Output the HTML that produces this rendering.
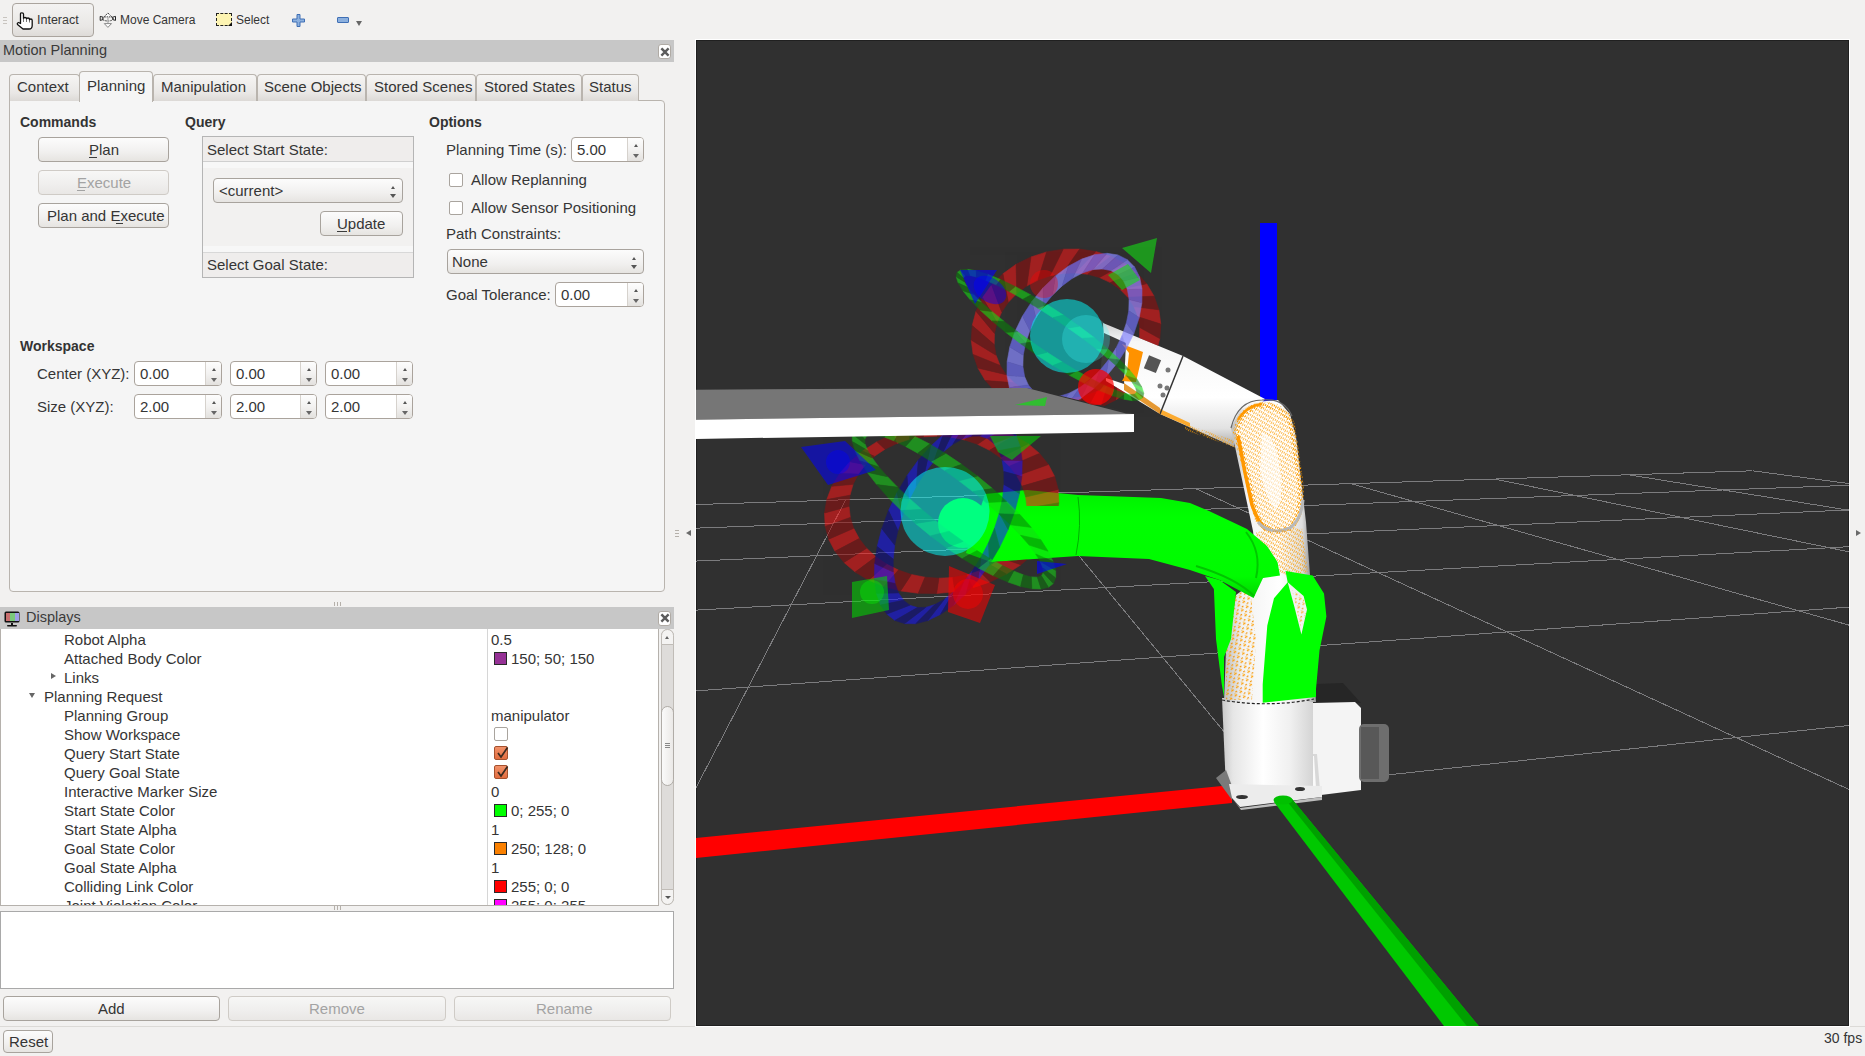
<!DOCTYPE html>
<html><head><meta charset="utf-8">
<style>
*{box-sizing:border-box}
html,body{margin:0;padding:0}
body{width:1865px;height:1056px;overflow:hidden;position:relative;background:#f2f1f0;font-family:"Liberation Sans",sans-serif;color:#353535;font-size:15px}
.a{position:absolute}
.t{position:absolute;white-space:pre;line-height:1;margin-top:-1px}
.btn{position:absolute;border:1px solid #a8a39d;border-radius:4px;background:linear-gradient(#fcfcfc,#f1f0ef 60%,#e6e4e1);}
.btnd{position:absolute;border:1px solid #cfcbc6;border-radius:4px;background:linear-gradient(#f7f7f6,#efeeed 60%,#e9e7e5);}
.tab{position:absolute;top:74px;height:27px;border:1px solid #b9b4ae;border-bottom:none;border-radius:4px 4px 0 0;background:linear-gradient(#f6f5f4,#e9e7e5 70%,#dcd9d6)}
.spin{position:absolute;height:25px;border:1px solid #aaa39c;border-radius:4px;background:#fff}
.spin .ar{position:absolute;right:0;top:0;bottom:0;width:16px;border-left:1px solid #d6d2cd;border-radius:0 3px 3px 0;background:linear-gradient(#fdfdfd,#f3f2f1 50%,#e3e1de)}
.spin .ar:before{content:"";position:absolute;left:6px;top:6px;border-left:2.5px solid transparent;border-right:2.5px solid transparent;border-bottom:3px solid #555}
.spin .ar:after{content:"";position:absolute;left:5px;top:16px;border-left:3.5px solid transparent;border-right:3.5px solid transparent;border-top:4px solid #666}
.combo:after{content:"";position:absolute;right:6px;top:15px;border-left:3.5px solid transparent;border-right:3.5px solid transparent;border-top:4px solid #555}
.combo:before{content:"";position:absolute;right:7px;top:7px;border-left:2.5px solid transparent;border-right:2.5px solid transparent;border-bottom:3px solid #555}
.ul{position:absolute;height:1px;background:#3c3c3c}
.combo{position:absolute;height:25px;border:1px solid #a8a39d;border-radius:4px;background:linear-gradient(#fcfcfc,#f1f0ef 60%,#e6e4e1)}
.cb{position:absolute;width:14px;height:14px;border:1px solid #a9a49e;border-radius:2px;background:#fff}
.row{position:absolute;left:64px;white-space:pre;line-height:1}
.val{position:absolute;left:491px;white-space:pre;line-height:1}
.sw{position:absolute;left:494px;width:13px;height:13px;border:1px solid #2a2a2a}
</style></head><body>

<!-- toolbar -->
<div class="a" style="left:3px;top:17px;width:4px;height:1px;background:#c8c4bf"></div>
<div class="a" style="left:3px;top:20px;width:4px;height:1px;background:#c8c4bf"></div>
<div class="a" style="left:3px;top:23px;width:4px;height:1px;background:#c8c4bf"></div>
<div class="btn" style="left:12px;top:3px;width:82px;height:34px;border-color:#aaa49e;background:linear-gradient(#f4f3f2,#e9e7e5 70%,#dedbd8)"></div>
<svg class="a" style="left:16px;top:12px" width="18" height="18" viewBox="0 0 18 18"><path d="M4.5,2 Q4.5,0.8 6,0.8 Q7.5,0.8 7.5,2 V6.5 Q7.5,5.5 9,5.5 Q10.5,5.5 10.5,6.6 V7 Q10.5,6 12,6 Q13.5,6 13.5,7.2 V8 Q13.5,7 14.8,7 Q16.2,7 16.2,8.5 V13.5 Q16.2,17 13,17 H7 L1.5,12.5 Q0.8,11 2.5,10.5 L4.5,11.5 Z" fill="#fff" stroke="#111" stroke-width="1.3" stroke-linejoin="round"/><path d="M7.5,6.5 V10 M10.5,7 V10 M13.5,8 V10.5" stroke="#555" stroke-width="0.8"/></svg>
<div class="t" style="left:37px;top:15px;font-size:12.5px">Interact</div>
<svg class="a" style="left:99px;top:11px" width="18" height="18" viewBox="0 0 18 18"><path d="M1.2,5.4 L4,6.2 L4,8.6 L1.2,9.4Z M16.5,5.4 L13.7,6.2 L13.7,8.6 L16.5,9.4Z" fill="#fff" stroke="#222" stroke-width="1"/><ellipse cx="8.9" cy="7.6" rx="5.6" ry="2.4" fill="none" stroke="#333" stroke-width="1" stroke-dasharray="1.5,1"/><path d="M8.9,2 L12.8,5.9 L5,5.9Z" fill="#fff" stroke="#333" stroke-width="1" stroke-dasharray="1.5,0.8"/><rect x="8.3" y="6" width="1.3" height="7" fill="#b0b0b0"/><path d="M5.3,12.6 L12.5,12.6 L8.9,16.4Z" fill="#fff" stroke="#888" stroke-width="1"/></svg>
<div class="t" style="left:120px;top:15px;font-size:12px">Move Camera</div>
<div class="a" style="left:216px;top:13px;width:16px;height:13px;border:1px dashed #222;background:#fdf4b2"></div>
<div class="a" style="left:228px;top:22px;width:0;height:0;border-left:4px solid transparent;border-bottom:4px solid #111"></div>
<div class="t" style="left:236px;top:15px;font-size:12px">Select</div>
<svg class="a" style="left:292px;top:14px" width="14" height="13" viewBox="0 0 14 13"><path d="M5 0.5h3v4.5h4.5v3h-4.5v4.5h-3v-4.5h-4.5v-3h4.5z" fill="#8cb0de" stroke="#3f6fb5" stroke-width="1"/></svg>
<div class="a" style="left:337px;top:17px;width:12px;height:6px;border:1px solid #3f6fb5;background:#8cb0de;border-radius:1px"></div>
<div class="a" style="left:356px;top:21px;width:0;height:0;border-left:3.5px solid transparent;border-right:3.5px solid transparent;border-top:5px solid #666"></div>

<!-- Motion Planning dock -->
<div class="a" style="left:0;top:40px;width:674px;height:22px;background:#c7c7c7"></div>
<div class="t" style="left:3px;top:44px;font-size:14.5px;color:#3a3a3a">Motion Planning</div>
<div class="a" style="left:658px;top:44px;width:13px;height:15px;background:#fff;border:1px solid #b0aba5;border-radius:3px"></div>
<svg class="a" style="left:659px;top:46px" width="12" height="12" viewBox="0 0 12 12"><path d="M3.2 3.2 L8.8 8.8 M8.8 3.2 L3.2 8.8" stroke="#5c5c5c" stroke-width="2.4" stroke-linecap="square"/></svg>

<!-- tab pane -->
<div class="a" style="left:9px;top:100px;width:656px;height:492px;border:1px solid #b9b4ae;border-radius:0 4px 4px 4px;background:#f5f5f5"></div>
<div class="tab" style="left:9px;width:71px"></div>
<div class="a" style="left:79px;top:71px;width:74px;height:31px;border:1px solid #b9b4ae;border-bottom:none;border-radius:4px 4px 0 0;background:#f5f5f5"></div>
<div class="tab" style="left:153px;width:104px"></div>
<div class="tab" style="left:257px;width:109px"></div>
<div class="tab" style="left:366px;width:110px"></div>
<div class="tab" style="left:476px;width:106px"></div>
<div class="tab" style="left:582px;width:57px"></div>
<div class="t" style="left:17px;top:80px">Context</div>
<div class="t" style="left:87px;top:79px">Planning</div>
<div class="t" style="left:161px;top:80px">Manipulation</div>
<div class="t" style="left:264px;top:80px">Scene Objects</div>
<div class="t" style="left:374px;top:80px">Stored Scenes</div>
<div class="t" style="left:484px;top:80px">Stored States</div>
<div class="t" style="left:589px;top:80px">Status</div>

<!-- Commands -->
<div class="t" style="left:20px;top:116px;font-size:14px;font-weight:bold;color:#333">Commands</div>
<div class="btn" style="left:38px;top:137px;width:131px;height:25px"></div>
<div class="t" style="left:89px;top:143px">Plan</div><div class="ul" style="left:89px;top:157px;width:8px"></div>
<div class="btnd" style="left:38px;top:170px;width:131px;height:25px"></div>
<div class="t" style="left:77px;top:176px;color:#a3a3a3">Execute</div><div class="ul" style="left:77px;top:190px;width:8px;background:#a3a3a3"></div>
<div class="btn" style="left:38px;top:203px;width:131px;height:25px"></div>
<div class="t" style="left:47px;top:209px">Plan and Execute</div><div class="ul" style="left:116px;top:223px;width:7px"></div>

<!-- Query -->
<div class="t" style="left:185px;top:116px;font-size:14px;font-weight:bold;color:#333">Query</div>
<div class="a" style="left:202px;top:136px;width:212px;height:142px;border:1px solid #b5b5b5;background:#f2f1f0"></div>
<div class="a" style="left:203px;top:137px;width:210px;height:25px;background:#efedec;border-bottom:1px solid #cfcfcf"></div>
<div class="a" style="left:203px;top:162px;width:210px;height:6px;background:#f7f7f7"></div>
<div class="a" style="left:203px;top:246px;width:210px;height:6px;background:#f7f7f7"></div>
<div class="a" style="left:203px;top:252px;width:210px;height:25px;background:#efedec;border-top:1px solid #d8d8d8"></div>
<div class="t" style="left:207px;top:143px">Select Start State:</div>
<div class="t" style="left:207px;top:258px">Select Goal State:</div>
<div class="combo" style="left:213px;top:178px;width:190px;height:25px"></div>
<div class="t" style="left:219px;top:184px">&lt;current&gt;</div>
<div class="btn" style="left:320px;top:211px;width:83px;height:25px"></div>
<div class="t" style="left:337px;top:217px">Update</div><div class="ul" style="left:337px;top:231px;width:10px"></div>

<!-- Options -->
<div class="t" style="left:429px;top:116px;font-size:14px;font-weight:bold;color:#333">Options</div>
<div class="t" style="left:446px;top:143px">Planning Time (s):</div>
<div class="spin" style="left:571px;top:137px;width:73px"><div class="ar"></div></div>
<div class="t" style="left:577px;top:143px">5.00</div>
<div class="cb" style="left:449px;top:173px"></div>
<div class="t" style="left:471px;top:173px">Allow Replanning</div>
<div class="cb" style="left:449px;top:201px"></div>
<div class="t" style="left:471px;top:201px">Allow Sensor Positioning</div>
<div class="t" style="left:446px;top:227px">Path Constraints:</div>
<div class="combo" style="left:447px;top:249px;width:197px;height:25px"></div>
<div class="t" style="left:452px;top:255px">None</div>
<div class="t" style="left:446px;top:288px">Goal Tolerance:</div>
<div class="spin" style="left:555px;top:282px;width:89px"><div class="ar"></div></div>
<div class="t" style="left:561px;top:288px">0.00</div>

<!-- Workspace -->
<div class="t" style="left:20px;top:340px;font-size:14px;font-weight:bold;color:#333">Workspace</div>
<div class="t" style="left:37px;top:367px">Center (XYZ):</div>
<div class="t" style="left:37px;top:400px">Size (XYZ):</div>
<div class="spin" style="left:134px;top:361px;width:88px"><div class="ar"></div></div>
<div class="spin" style="left:230px;top:361px;width:87px"><div class="ar"></div></div>
<div class="spin" style="left:325px;top:361px;width:88px"><div class="ar"></div></div>
<div class="spin" style="left:134px;top:394px;width:88px"><div class="ar"></div></div>
<div class="spin" style="left:230px;top:394px;width:87px"><div class="ar"></div></div>
<div class="spin" style="left:325px;top:394px;width:88px"><div class="ar"></div></div>
<div class="t" style="left:140px;top:367px">0.00</div>
<div class="t" style="left:236px;top:367px">0.00</div>
<div class="t" style="left:331px;top:367px">0.00</div>
<div class="t" style="left:140px;top:400px">2.00</div>
<div class="t" style="left:236px;top:400px">2.00</div>
<div class="t" style="left:331px;top:400px">2.00</div>

<!-- Displays dock -->
<div class="a" style="left:0;top:607px;width:674px;height:22px;background:#c7c7c7"></div>
<div class="t" style="left:26px;top:611px;font-size:14.5px;color:#3a3a3a">Displays</div>
<div class="a" style="left:658px;top:611px;width:13px;height:15px;background:#fff;border:1px solid #b0aba5;border-radius:3px"></div><svg class="a" style="left:659px;top:612px" width="12" height="12" viewBox="0 0 12 12"><path d="M3.2 3.2 L8.8 8.8 M8.8 3.2 L3.2 8.8" stroke="#5c5c5c" stroke-width="2.4" stroke-linecap="square"/></svg>
<svg class="a" style="left:4px;top:611px" width="17" height="16" viewBox="0 0 17 16"><rect x="0.5" y="0.5" width="15" height="11" rx="1.5" fill="#111"/><rect x="2" y="2" width="4" height="8" fill="#c86e6e"/><rect x="6" y="2" width="5" height="8" fill="#7ac87a"/><rect x="11" y="2" width="4" height="8" fill="#9e9ee6"/><rect x="7" y="12" width="2" height="2" fill="#111"/><rect x="3" y="14" width="10" height="1.6" rx="0.8" fill="#111"/></svg>
<!-- splitter grips -->
<div class="a" style="left:334px;top:602px;width:1px;height:4px;background:#b5b0aa"></div>
<div class="a" style="left:337px;top:602px;width:1px;height:4px;background:#b5b0aa"></div>
<div class="a" style="left:340px;top:602px;width:1px;height:4px;background:#b5b0aa"></div>
<div class="a" style="left:334px;top:906px;width:1px;height:4px;background:#b5b0aa"></div>
<div class="a" style="left:337px;top:906px;width:1px;height:4px;background:#b5b0aa"></div>
<div class="a" style="left:340px;top:906px;width:1px;height:4px;background:#b5b0aa"></div>
<div class="a" style="left:675px;top:530px;width:4px;height:1px;background:#b5b0aa"></div>
<div class="a" style="left:675px;top:533px;width:4px;height:1px;background:#b5b0aa"></div>
<div class="a" style="left:675px;top:536px;width:4px;height:1px;background:#b5b0aa"></div>
<div class="a" style="left:686px;top:530px;width:0;height:0;border-top:3.5px solid transparent;border-bottom:3.5px solid transparent;border-right:5px solid #6a6a6a"></div>
<div class="a" style="left:1856px;top:530px;width:0;height:0;border-top:3.5px solid transparent;border-bottom:3.5px solid transparent;border-left:5px solid #6a6a6a"></div>

<div class="a" style="left:0;top:629px;width:659px;height:277px;background:#fff;overflow:hidden">
<div class="row" style="left:64px;top:3px">Robot Alpha</div>
<div class="val" style="top:3px">0.5</div>
<div class="row" style="left:64px;top:22px">Attached Body Color</div>
<div class="sw" style="top:23px;background:#963296"></div>
<div class="val" style="left:511px;top:22px">150; 50; 150</div>
<div class="row" style="left:64px;top:41px">Links</div>
<div class="row" style="left:44px;top:60px">Planning Request</div>
<div class="row" style="left:64px;top:79px">Planning Group</div>
<div class="val" style="top:79px">manipulator</div>
<div class="row" style="left:64px;top:98px">Show Workspace</div>
<div class="cb" style="left:494px;top:98px"></div>
<div class="row" style="left:64px;top:117px">Query Start State</div>
<div class="cb" style="left:494px;top:117px;background:linear-gradient(#f2926a,#e26c3e);border-color:#a5512e"></div><svg class="a" style="left:495px;top:116px" width="15" height="15" viewBox="0 0 15 15"><path d="M3 8 L6 12 L12.5 2.5" fill="none" stroke="#3a2a20" stroke-width="1.7"/></svg>
<div class="row" style="left:64px;top:136px">Query Goal State</div>
<div class="cb" style="left:494px;top:136px;background:linear-gradient(#f2926a,#e26c3e);border-color:#a5512e"></div><svg class="a" style="left:495px;top:135px" width="15" height="15" viewBox="0 0 15 15"><path d="M3 8 L6 12 L12.5 2.5" fill="none" stroke="#3a2a20" stroke-width="1.7"/></svg>
<div class="row" style="left:64px;top:155px">Interactive Marker Size</div>
<div class="val" style="top:155px">0</div>
<div class="row" style="left:64px;top:174px">Start State Color</div>
<div class="sw" style="top:175px;background:#00ff00"></div>
<div class="val" style="left:511px;top:174px">0; 255; 0</div>
<div class="row" style="left:64px;top:193px">Start State Alpha</div>
<div class="val" style="top:193px">1</div>
<div class="row" style="left:64px;top:212px">Goal State Color</div>
<div class="sw" style="top:213px;background:#fa8000"></div>
<div class="val" style="left:511px;top:212px">250; 128; 0</div>
<div class="row" style="left:64px;top:231px">Goal State Alpha</div>
<div class="val" style="top:231px">1</div>
<div class="row" style="left:64px;top:250px">Colliding Link Color</div>
<div class="sw" style="top:251px;background:#ff0000"></div>
<div class="val" style="left:511px;top:250px">255; 0; 0</div>
<div class="row" style="left:64px;top:269px">Joint Violation Color</div>
<div class="sw" style="top:270px;background:#ff00ff"></div>
<div class="val" style="left:511px;top:269px">255; 0; 255</div>
<div class="a" style="left:487px;top:0;width:1px;height:277px;background:#d6d6d6"></div>
<div class="a" style="left:51px;top:44px;width:0;height:0;border-top:3.5px solid transparent;border-bottom:3.5px solid transparent;border-left:5px solid #666"></div>
<div class="a" style="left:29px;top:64px;width:0;height:0;border-left:3.5px solid transparent;border-right:3.5px solid transparent;border-top:5px solid #666"></div>
</div>
<div class="a" style="left:0;top:629px;width:659px;height:277px;border:1px solid #b5b1ac;border-top:none"></div>
<!-- scrollbar -->
<div class="a" style="left:661px;top:629px;width:13px;height:276px;border:1px solid #c0bcb7;border-radius:7px;background:#dedcda"></div>
<div class="a" style="left:661px;top:629px;width:13px;height:16px;border:1px solid #c0bcb7;border-radius:7px 7px 0 0;background:#f4f3f2"></div>
<div class="a" style="left:665px;top:636px;width:0;height:0;border-left:2.5px solid transparent;border-right:2.5px solid transparent;border-bottom:3px solid #666"></div>
<div class="a" style="left:661px;top:706px;width:13px;height:80px;border:1px solid #b0aca7;border-radius:7px;background:linear-gradient(90deg,#fafafa,#ebe9e7)"></div>
<div class="a" style="left:665px;top:743px;width:5px;height:1px;background:#888"></div>
<div class="a" style="left:665px;top:745px;width:5px;height:1px;background:#888"></div>
<div class="a" style="left:665px;top:747px;width:5px;height:1px;background:#888"></div>
<div class="a" style="left:661px;top:889px;width:13px;height:16px;border:1px solid #c0bcb7;border-radius:0 0 7px 7px;background:#f4f3f2"></div>
<div class="a" style="left:665px;top:896px;width:0;height:0;border-left:3px solid transparent;border-right:3px solid transparent;border-top:3px solid #555"></div>

<!-- description -->
<div class="a" style="left:0;top:911px;width:674px;height:78px;background:#fff;border:1px solid #a9a9a9"></div>
<div class="btn" style="left:3px;top:996px;width:217px;height:25px"></div>
<div class="t" style="left:98px;top:1002px">Add</div>
<div class="btnd" style="left:228px;top:996px;width:218px;height:25px"></div>
<div class="t" style="left:309px;top:1002px;color:#a3a3a3">Remove</div>
<div class="btnd" style="left:454px;top:996px;width:217px;height:25px"></div>
<div class="t" style="left:536px;top:1002px;color:#a3a3a3">Rename</div>

<!-- status bar -->
<div class="a" style="left:0;top:1026px;width:1865px;height:1px;background:#dcdad7"></div>
<div class="btn" style="left:3px;top:1030px;width:50px;height:23px"></div>
<div class="t" style="left:9px;top:1035px">Reset</div>
<div class="t" style="left:1824px;top:1032px;font-size:14px">30 fps</div>

<!-- 3D view -->
<div class="a" style="left:695px;top:39px;width:1155px;height:988px;background:#fff"></div>
<div class="a" style="left:696px;top:40px;width:1153px;height:986px;background:#303030"></div>
<div class="a" style="left:696px;top:40px;width:1153px;height:986px;border:1px solid #202020"></div>
<!--SCENE--><svg class="a" style="left:696px;top:40px" width="1153" height="986" viewBox="696 40 1153 986"><g stroke="#7c7c7e" stroke-width="1" fill="none" shape-rendering="crispEdges" transform="translate(0,0.6)"><line x1="2860.3" y1="616.4" x2="-6472.5" y2="1617.4"/><line x1="2452.8" y1="562.6" x2="-2305.5" y2="908.5"/><line x1="2186.6" y1="527.5" x2="-1143.3" y2="710.7"/><line x1="1999.1" y1="502.7" x2="-597" y2="617.8"/><line x1="1859.9" y1="484.3" x2="-279.7" y2="563.8"/><line x1="1752.5" y1="470.2" x2="-72.2" y2="528.5"/><line x1="1752.5" y1="470.2" x2="7291.7" y2="1201.1"/><line x1="1628" y1="474.1" x2="6748.2" y2="1296.9"/><line x1="1494.5" y1="478.4" x2="6044.4" y2="1412.6"/><line x1="1350.8" y1="483" x2="5123" y2="1554.7"/><line x1="1195.7" y1="488" x2="3898.4" y2="1732.7"/><line x1="1027.9" y1="493.3" x2="2238.5" y2="1961.3"/><line x1="845.7" y1="499.2" x2="-71.8" y2="2264"/><line x1="647.1" y1="505.5" x2="-3405.2" y2="2681.3"/><line x1="429.8" y1="512.5" x2="-8464.5" y2="3289.4"/><line x1="191.2" y1="520.1" x2="-16745.6" y2="4249.5"/><line x1="-72.2" y1="528.5" x2="-32073.6" y2="5972.9"/></g>
<polygon points="690,838.6 1232,785 1232,803 690,858.5" fill="#ff0000" />
<rect x="1260" y="223" width="17" height="183" fill="#0000ff"/>
<polygon points="1316,684 1343,683 1361,703 1313,704" fill="#262626" />
<polygon points="1313,703 1355,702 1361,708 1361,790 1313,796" fill="#f4f4f4" />
<rect x="1359" y="724" width="30" height="58" rx="5" fill="#6e6e6e"/>
<rect x="1361" y="727" width="18" height="52" fill="#585858"/>
<polygon points="1298,754 1317,754 1320,790 1296,792" fill="#d8d8d8" />
<polygon points="1304,756 1314,756 1316,788 1303,789" fill="#fafafa" />
<defs><linearGradient id="cyl" x1="0" x2="1" y1="0" y2="0"><stop offset="0" stop-color="#c8c8c8"/><stop offset="0.12" stop-color="#e6e6e6"/><stop offset="0.45" stop-color="#ffffff"/><stop offset="0.75" stop-color="#f0f0f0"/><stop offset="1" stop-color="#d4d4d4"/></linearGradient><linearGradient id="lnk" x1="0" x2="1" y1="0" y2="0"><stop offset="0" stop-color="#bdbdbd"/><stop offset="0.2" stop-color="#f2f2f2"/><stop offset="0.6" stop-color="#ffffff"/><stop offset="0.9" stop-color="#dedede"/><stop offset="1" stop-color="#9a9a9a"/></linearGradient><linearGradient id="arm" x1="0" x2="0" y1="0" y2="1"><stop offset="0" stop-color="#cfcfcf"/><stop offset="0.15" stop-color="#f6f6f6"/><stop offset="0.6" stop-color="#ffffff"/><stop offset="0.85" stop-color="#e2e2e2"/><stop offset="1" stop-color="#a8a8a8"/></linearGradient><pattern id="spk" width="5" height="5" patternUnits="userSpaceOnUse" patternTransform="rotate(30)"><rect width="5" height="5" fill="none"/><rect x="0" y="0" width="2" height="1" fill="#ff9e00"/><rect x="3" y="2" width="1" height="2" fill="#f59000"/></pattern></defs>
<polygon points="1222,698 1313,698 1313,789 1226,789" fill="url(#cyl)" />
<polygon points="1216,778 1226,770 1232,786 1232,800" fill="#7a7a7a" />
<polygon points="1229,784 1322,786 1322,797 1240,807 1232,798" fill="#ececec" />
<polygon points="1232,798 1240,808 1322,797 1322,800 1241,810" fill="#bdbdbd" />
<ellipse cx="1242" cy="797" rx="6" ry="2" fill="#333"/><ellipse cx="1300" cy="789" rx="5" ry="2" fill="#333"/>
<polygon points="1274,802 1292,799 1482,1030 1447,1030" fill="#00c800"/>
<polygon points="1286,800 1292,799 1482,1030 1470,1030" fill="#00a000"/>
<ellipse cx="1283" cy="800" rx="9.5" ry="4.5" fill="#00c000"/>
<polygon points="1103,323 1183,356 1265,399 1248,418 1236,436 1234,447 1160,414 1106,381" fill="url(#arm)" />
<polygon points="1160,409 1190,423 1190,427 1160,414" fill="#ff9a00" opacity="0.8"/>
<polygon points="1185,424 1236,441 1236,448 1185,430" fill="url(#spk3)" opacity="0.7"/>
<line x1="1183" y1="356" x2="1160" y2="414" stroke="#333" stroke-width="1.5"/>
<polygon points="1104,333 1126,343 1124,384 1100,376" fill="#3c3c3c" />
<polygon points="1122,344 1143,352 1136,382 1122,381 1127,372 1129,353" fill="#ff9200" />
<polygon points="1124,383 1160,408 1160,414 1124,390" fill="#e08000" opacity="0.8"/>
<rect x="1146" y="357" width="13" height="14" fill="#555" transform="rotate(22 1152 364)"/>
<circle cx="1168" cy="370" r="2.5" fill="#777"/><circle cx="1160" cy="386" r="2.5" fill="#777"/><circle cx="1167" cy="388" r="2.5" fill="#777"/><circle cx="1163" cy="395" r="2.5" fill="#777"/>
<defs><pattern id="spk2" width="6" height="6" patternUnits="userSpaceOnUse" patternTransform="rotate(-35)"><rect x="0" y="0" width="3" height="1.2" fill="#ff9c00"/><rect x="3" y="3" width="2" height="1.2" fill="#f29000"/><rect x="1" y="4.5" width="1.5" height="1" fill="#ffa800"/></pattern></defs>
<polygon points="1224,702 1226,650 1236,595 1258,579 1276,572 1290,576 1306,590 1312,640 1316,702" fill="url(#lnk)" />
<polygon points="1226,600 1250,586 1256,640 1252,700 1226,700" fill="url(#spk2)" opacity="0.9"/>
<path d="M1258,580 Q1276,566 1290,576" fill="none" stroke="#555" stroke-width="2"/>
<defs><pattern id="spk3" width="4" height="4" patternUnits="userSpaceOnUse" patternTransform="rotate(-60)"><rect x="0" y="0" width="3" height="1" fill="#ffa000"/><rect x="1" y="2" width="2" height="1" fill="#f39200"/></pattern></defs>
<polygon points="1231,428 1240,410 1256,402 1278,400 1290,414 1296,437 1306,522 1310,575 1290,578 1276,572 1258,575 1253,531 1240,470" fill="url(#lnk)" />
<path d="M1231,428 Q1238,400 1262,400 Q1284,398 1292,416" fill="none" stroke="#666" stroke-width="1.2"/>
<path d="M1236,432 Q1240,408 1262,405 Q1284,404 1292,425 L1300,480 Q1304,515 1290,528 Q1270,536 1258,520 Q1252,500 1246,470 Z" fill="#ffffff"/>
<path d="M1236,432 Q1240,408 1262,405 Q1284,404 1292,425 L1300,480 Q1304,515 1290,528 Q1270,536 1258,520 Q1252,500 1246,470 Z" fill="url(#spk3)" opacity="0.7"/>
<path d="M1262,432 Q1276,436 1280,470 Q1284,500 1276,510 Q1266,500 1260,470Z" fill="#ffffff" opacity="0.6"/>
<path d="M1236,432 Q1240,408 1262,405 Q1284,404 1292,425 L1300,480 Q1304,515 1290,528 Q1270,536 1258,520 Q1252,500 1246,470 Z" fill="none" stroke="url(#spk3)" stroke-width="6"/>
<path d="M1238,436 Q1244,470 1252,505 Q1258,522 1266,530" fill="none" stroke="#ff9800" stroke-width="3.5"/>
<path d="M1238,420 Q1246,406 1262,404" fill="none" stroke="#ff9800" stroke-width="2.5"/>
<path d="M1258,522 Q1270,536 1290,528 Q1302,518 1303,500" fill="none" stroke="#b8b8b8" stroke-width="3"/>
<polygon points="1256,532 1302,528 1308,572 1290,576 1276,571 1259,574" fill="url(#spk3)" opacity="0.75"/>
<defs><linearGradient id="grn" x1="0" x2="0" y1="0" y2="1"><stop offset="0" stop-color="#00f000"/><stop offset="0.25" stop-color="#00ff00"/><stop offset="0.8" stop-color="#00fb00"/><stop offset="1" stop-color="#00d400"/></linearGradient></defs>
<polygon points="985,494 1027,490 1078,495 1161,498 1190,503 1209,511 1247,529 1267,546 1277.5,562 1280,575.5 1263,578 1253.6,598 1219.5,580 1190,570 1149,559 1078,556 991,562 966,553" fill="url(#grn)" />
<path d="M1078,497 Q1082,525 1076,555" fill="none" stroke="#00b000" stroke-width="1"/>
<path d="M1196,566 Q1236,578 1254,596" fill="none" stroke="#00c400" stroke-width="2"/>
<path d="M1246,532 Q1262,552 1256,578" fill="none" stroke="#00c800" stroke-width="2"/>
<circle cx="963" cy="523" r="25" fill="#00ff00"/>
<polygon points="1205,576 1219.5,580 1236,592 1231,639 1224,657 1224,697 1221.8,684.5 1216,639 1213.9,589" fill="#00ff00" />
<polygon points="1285.5,571 1312.7,575.5 1324,593.6 1326.4,616.4 1319.5,650.5 1316,689 1316,697 1262.7,702.7 1262.7,684.5 1267.3,625.5 1274,598.2 1287.7,582.3" fill="#00ff00" />
<polygon points="1287.7,582.3 1303.6,596 1307,609.5 1301.4,634.5 1294.5,607.3" fill="#f2f2f2" />
<polygon points="1292,590 1303.6,598 1306,612 1301,630 1296,606" fill="url(#spk2)" opacity="0.7"/>
<path d="M1222,700 Q1268,708 1314,699" fill="none" stroke="#222" stroke-width="1.2" stroke-dasharray="3,2"/>
<clipPath id="armclip"><path clip-rule="evenodd" d="M690,40 H1849 V1030 H690Z M1030,506 L1078,506 L1161,506 L1209,511 L1256,539 L1277,565 L1290,580 L1270,590 L1254,599 L1232,588 L1197,572 L1149,559 L1078,556 L991,562 L966,553 L985,506Z"/></clipPath>
<g opacity="0.55" clip-path="url(#armclip)"><path d="M1058.2,489.4 L1058.9,502.8 L1027,508.1 L1025.7,497Z M1056.6,516.2 L1051.6,529.5 L1022.9,530.1 L1026,519.2Z M1043.8,542.2 L1033.5,554.1 L1010.5,549.7 L1017.7,540.3Z M1020.9,564.8 L1006.4,574.1 L991,565.2 L1001.6,558.1Z M990.3,581.9 L973,587.7 L966.4,575.1 L979.2,570.9Z M955,591.7 L936.6,593.5 L938.9,578.2 L952.8,577.5Z M918.3,593.3 L900.6,590.9 L911.4,574.5 L925,577.2Z M883.9,586.5 L868.7,580.2 L886.5,564.1 L898.5,570.1Z M855.2,572.1 L843.9,562.4 L866.6,548.2 L875.8,556.8Z M835,551.3 L828.7,539.2 L853.7,528.3 L859.2,538.6Z M825.2,526.4 L824.5,513 L849,506.3 L850.3,517.4Z M826.8,499.6 L831.8,486.3 L853.1,484.3 L850,495.2Z M839.6,473.6 L849.9,461.7 L865.5,464.7 L858.3,474.1Z M862.5,451 L877,441.7 L885,449.2 L874.4,456.3Z M893.1,433.9 L910.4,428.1 L909.6,439.3 L896.8,443.5Z M928.4,424.1 L946.8,422.3 L937.1,436.2 L923.2,436.9Z M965.1,422.5 L982.8,424.9 L964.6,439.9 L951,437.2Z M999.5,429.3 L1014.7,435.6 L989.5,450.3 L977.5,444.3Z M1028.2,443.7 L1039.5,453.4 L1009.4,466.2 L1000.2,457.6Z M1048.4,464.5 L1054.7,476.6 L1022.3,486.1 L1016.8,475.8Z" fill="#ff1414" stroke="#ff1414" stroke-width="0.6"/><path d="M1058.9,502.8 L1056.6,516.2 L1026,519.2 L1027,508.1Z M1051.6,529.5 L1043.8,542.2 L1017.7,540.3 L1022.9,530.1Z M1033.5,554.1 L1020.9,564.8 L1001.6,558.1 L1010.5,549.7Z M1006.4,574.1 L990.3,581.9 L979.2,570.9 L991,565.2Z M973,587.7 L955,591.7 L952.8,577.5 L966.4,575.1Z M936.6,593.5 L918.3,593.3 L925,577.2 L938.9,578.2Z M900.6,590.9 L883.9,586.5 L898.5,570.1 L911.4,574.5Z M868.7,580.2 L855.2,572.1 L875.8,556.8 L886.5,564.1Z M843.9,562.4 L835,551.3 L859.2,538.6 L866.6,548.2Z M828.7,539.2 L825.2,526.4 L850.3,517.4 L853.7,528.3Z M824.5,513 L826.8,499.6 L850,495.2 L849,506.3Z M831.8,486.3 L839.6,473.6 L858.3,474.1 L853.1,484.3Z M849.9,461.7 L862.5,451 L874.4,456.3 L865.5,464.7Z M877,441.7 L893.1,433.9 L896.8,443.5 L885,449.2Z M910.4,428.1 L928.4,424.1 L923.2,436.9 L909.6,439.3Z M946.8,422.3 L965.1,422.5 L951,437.2 L937.1,436.2Z M982.8,424.9 L999.5,429.3 L977.5,444.3 L964.6,439.9Z M1014.7,435.6 L1028.2,443.7 L1000.2,457.6 L989.5,450.3Z M1039.5,453.4 L1048.4,464.5 L1016.8,475.8 L1009.4,466.2Z M1054.7,476.6 L1058.2,489.4 L1025.7,497 L1022.3,486.1Z" fill="#9a0c0c" stroke="#9a0c0c" stroke-width="0.6"/></g>
<g opacity="0.55"><path d="M1001.7,419.6 L1009.8,425.9 L987.4,438.4 L979.9,436Z M1016,435 L1020.2,446.7 L998.7,450.7 L993.7,443.4Z M1022.2,460.6 L1021.9,476.4 L1003.9,471.6 L1002.1,460.2Z M1019.4,493.4 L1014.8,511.3 L1002.5,498.5 L1004,484.5Z M1008.1,529.4 L999.6,547.3 L994.5,528.2 L999.3,513.2Z M989.6,564.3 L978.2,580 L981,557.2 L988.4,543Z M966,593.8 L953.3,605.4 L963.6,581.9 L972.7,570.3Z M940.4,614.4 L927.7,620.6 L944.4,599.3 L954.1,591.6Z M915.7,623.7 L904.6,623.6 L925.7,607.4 L934.9,604.6Z M894.9,620.4 L886.8,614.1 L909.8,605.2 L917.3,607.6Z M880.6,605 L876.4,593.3 L898.5,592.9 L903.5,600.2Z M874.4,579.4 L874.7,563.6 L893.3,572 L895.1,583.4Z M877.2,546.6 L881.8,528.7 L894.7,545.1 L893.2,559.1Z M888.5,510.6 L897,492.7 L902.7,515.4 L897.9,530.4Z M907,475.7 L918.4,460 L916.2,486.4 L908.8,500.6Z M930.6,446.2 L943.3,434.6 L933.6,461.7 L924.5,473.3Z M956.2,425.6 L968.9,419.4 L952.8,444.3 L943.1,452Z M980.9,416.3 L992,416.4 L971.5,436.2 L962.3,439Z" fill="#1414ff" stroke="#1414ff" stroke-width="0.6"/><path d="M1009.8,425.9 L1016,435 L993.7,443.4 L987.4,438.4Z M1020.2,446.7 L1022.2,460.6 L1002.1,460.2 L998.7,450.7Z M1021.9,476.4 L1019.4,493.4 L1004,484.5 L1003.9,471.6Z M1014.8,511.3 L1008.1,529.4 L999.3,513.2 L1002.5,498.5Z M999.6,547.3 L989.6,564.3 L988.4,543 L994.5,528.2Z M978.2,580 L966,593.8 L972.7,570.3 L981,557.2Z M953.3,605.4 L940.4,614.4 L954.1,591.6 L963.6,581.9Z M927.7,620.6 L915.7,623.7 L934.9,604.6 L944.4,599.3Z M904.6,623.6 L894.9,620.4 L917.3,607.6 L925.7,607.4Z M886.8,614.1 L880.6,605 L903.5,600.2 L909.8,605.2Z M876.4,593.3 L874.4,579.4 L895.1,583.4 L898.5,592.9Z M874.7,563.6 L877.2,546.6 L893.2,559.1 L893.3,572Z M881.8,528.7 L888.5,510.6 L897.9,530.4 L894.7,545.1Z M897,492.7 L907,475.7 L908.8,500.6 L902.7,515.4Z M918.4,460 L930.6,446.2 L924.5,473.3 L916.2,486.4Z M943.3,434.6 L956.2,425.6 L943.1,452 L933.6,461.7Z M968.9,419.4 L980.9,416.3 L962.3,439 L952.8,444.3Z M992,416.4 L1001.7,419.6 L979.9,436 L971.5,436.2Z" fill="#0a0a90" stroke="#0a0a90" stroke-width="0.6"/></g>
<g opacity="0.55"><path d="M1053.3,583.6 L1048.4,587.3 L1041.4,575.8 L1043.3,572.7Z M1041.2,589 L1031.8,588.7 L1031.3,576.9 L1037.4,577.2Z M1020.6,586.4 L1007.7,582 L1013.7,571 L1023.4,574.8Z M993.4,575.8 L978.2,567.9 L990.2,558.8 L1002.5,565.6Z M962.4,558.5 L946.4,547.7 L963.2,541.4 L977,550.6Z M930.6,535.9 L915.4,523.4 L935.2,520.5 L949.1,531.2Z M901.1,510.5 L888.1,497.5 L909.2,498.2 L921.8,509.4Z M876.7,484.6 L867.2,472.3 L887.5,476.7 L897.6,487.2Z M859.9,460.8 L854.9,450.5 L872.3,458 L878.9,466.9Z M852.3,441.5 L852.3,434.1 L865.1,444.1 L867.6,450.4Z M854.7,428.4 L859.6,424.7 L866.6,436.2 L864.7,439.3Z M866.8,423 L876.2,423.3 L876.7,435.1 L870.6,434.8Z M887.4,425.6 L900.3,430 L894.3,441 L884.6,437.2Z M914.6,436.2 L929.8,444.1 L917.8,453.2 L905.5,446.4Z M945.6,453.5 L961.6,464.3 L944.8,470.6 L931,461.4Z M977.4,476.1 L992.6,488.6 L972.8,491.5 L958.9,480.8Z M1006.9,501.5 L1019.9,514.5 L998.8,513.8 L986.2,502.6Z M1031.3,527.4 L1040.8,539.7 L1020.5,535.3 L1010.4,524.8Z M1048.1,551.2 L1053.1,561.5 L1035.7,554 L1029.1,545.1Z M1055.7,570.5 L1055.7,577.9 L1042.9,567.9 L1040.4,561.6Z" fill="#14dc14" stroke="#14dc14" stroke-width="0.6"/><path d="M1048.4,587.3 L1041.2,589 L1037.4,577.2 L1041.4,575.8Z M1031.8,588.7 L1020.6,586.4 L1023.4,574.8 L1031.3,576.9Z M1007.7,582 L993.4,575.8 L1002.5,565.6 L1013.7,571Z M978.2,567.9 L962.4,558.5 L977,550.6 L990.2,558.8Z M946.4,547.7 L930.6,535.9 L949.1,531.2 L963.2,541.4Z M915.4,523.4 L901.1,510.5 L921.8,509.4 L935.2,520.5Z M888.1,497.5 L876.7,484.6 L897.6,487.2 L909.2,498.2Z M867.2,472.3 L859.9,460.8 L878.9,466.9 L887.5,476.7Z M854.9,450.5 L852.3,441.5 L867.6,450.4 L872.3,458Z M852.3,434.1 L854.7,428.4 L864.7,439.3 L865.1,444.1Z M859.6,424.7 L866.8,423 L870.6,434.8 L866.6,436.2Z M876.2,423.3 L887.4,425.6 L884.6,437.2 L876.7,435.1Z M900.3,430 L914.6,436.2 L905.5,446.4 L894.3,441Z M929.8,444.1 L945.6,453.5 L931,461.4 L917.8,453.2Z M961.6,464.3 L977.4,476.1 L958.9,480.8 L944.8,470.6Z M992.6,488.6 L1006.9,501.5 L986.2,502.6 L972.8,491.5Z M1019.9,514.5 L1031.3,527.4 L1010.4,524.8 L998.8,513.8Z M1040.8,539.7 L1048.1,551.2 L1029.1,545.1 L1020.5,535.3Z M1053.1,561.5 L1055.7,570.5 L1040.4,561.6 L1035.7,554Z M1055.7,577.9 L1053.3,583.6 L1043.3,572.7 L1042.9,567.9Z" fill="#0a800a" stroke="#0a800a" stroke-width="0.6"/></g>
<circle cx="945" cy="511.4" r="44.5" fill="#00ffff" opacity="0.5"/>
<polygon points="801,447 845,441 876,470 828,485" fill="#0000ff" opacity="0.55"/>
<circle cx="838" cy="462" r="12" fill="#0000ff" opacity="0.4"/>
<polygon points="852,582 887,576 889,610 852,618" fill="#00dc00" opacity="0.55"/>
<circle cx="872" cy="592" r="12" fill="#00ff00" opacity="0.35"/>
<polygon points="949,566 995,585 980,623 948,612" fill="#ff0000" opacity="0.55"/>
<circle cx="968" cy="594" r="15" fill="#ff0000" opacity="0.45"/>
<polygon points="1037,561 1067,564 1037,574" fill="#0000ff" opacity="0.6"/>
<polygon points="990,436 1041,436 1012,460 998,452" fill="#00dc00" opacity="0.55"/>
<polygon points="690,389.7 1027,388 1126,413.6 1134,413.9 690,419.8" fill="#767676" />
<polygon points="690,419.8 1134,413.9 1134,432.1 690,439" fill="#ffffff" />
<clipPath id="tblclip"><path clip-rule="evenodd" d="M690,40 H1849 V1030 H690Z M690,388 L1027,388 L1134,413 L1134,1030 L690,1030Z M1103,323 L1183,356 L1265,399 L1240,430 L1234,447 L1160,414 L1106,381Z"/></clipPath>
<clipPath id="tblclip2"><polygon points="690,40 1849,40 1849,1030 1134,1030 1134,413 1027,388 690,389.7"/></clipPath>
<g opacity="0.55" clip-path="url(#tblclip)"><path d="M1158.9,309.8 L1160.8,324.1 L1137.9,316.7 L1133.9,306.6Z M1159.8,338.6 L1156,352.9 L1139.5,338.5 L1139.8,327.5Z M1149.5,366.6 L1140.4,379.2 L1132.3,359.9 L1137,349.4Z M1129.1,390.4 L1115.9,399.9 L1117.2,378.4 L1125.7,369.7Z M1101.1,407.2 L1085.3,412.3 L1096.1,391.9 L1107.3,385.9Z M1068.8,415 L1052.3,415.1 L1071.5,398.6 L1084.1,396.1Z M1036.2,412.7 L1021.1,407.9 L1046.3,397.7 L1058.8,399.1Z M1007.2,400.7 L995.2,391.5 L1023.7,389.4 L1034.5,394.5Z M985.3,380.5 L977.9,368 L1006.2,374.7 L1014.1,382.8Z M973.1,354.4 L971.2,340.1 L996.1,355.3 L1000.1,365.4Z M972.2,325.6 L976,311.3 L994.5,333.5 L994.2,344.5Z M982.5,297.6 L991.6,285 L1001.7,312.1 L997,322.6Z M1002.9,273.8 L1016.1,264.3 L1016.8,293.6 L1008.3,302.3Z M1030.9,257 L1046.7,251.9 L1037.9,280.1 L1026.7,286.1Z M1063.2,249.2 L1079.7,249.1 L1062.5,273.4 L1049.9,275.9Z M1095.8,251.5 L1110.9,256.3 L1087.7,274.3 L1075.2,272.9Z M1124.8,263.5 L1136.8,272.7 L1110.3,282.6 L1099.5,277.5Z M1146.7,283.7 L1154.1,296.2 L1127.8,297.3 L1119.9,289.2Z" fill="#ff1414" stroke="#ff1414" stroke-width="0.6"/><path d="M1160.8,324.1 L1159.8,338.6 L1139.8,327.5 L1137.9,316.7Z M1156,352.9 L1149.5,366.6 L1137,349.4 L1139.5,338.5Z M1140.4,379.2 L1129.1,390.4 L1125.7,369.7 L1132.3,359.9Z M1115.9,399.9 L1101.1,407.2 L1107.3,385.9 L1117.2,378.4Z M1085.3,412.3 L1068.8,415 L1084.1,396.1 L1096.1,391.9Z M1052.3,415.1 L1036.2,412.7 L1058.8,399.1 L1071.5,398.6Z M1021.1,407.9 L1007.2,400.7 L1034.5,394.5 L1046.3,397.7Z M995.2,391.5 L985.3,380.5 L1014.1,382.8 L1023.7,389.4Z M977.9,368 L973.1,354.4 L1000.1,365.4 L1006.2,374.7Z M971.2,340.1 L972.2,325.6 L994.2,344.5 L996.1,355.3Z M976,311.3 L982.5,297.6 L997,322.6 L994.5,333.5Z M991.6,285 L1002.9,273.8 L1008.3,302.3 L1001.7,312.1Z M1016.1,264.3 L1030.9,257 L1026.7,286.1 L1016.8,293.6Z M1046.7,251.9 L1063.2,249.2 L1049.9,275.9 L1037.9,280.1Z M1079.7,249.1 L1095.8,251.5 L1075.2,272.9 L1062.5,273.4Z M1110.9,256.3 L1124.8,263.5 L1099.5,277.5 L1087.7,274.3Z M1136.8,272.7 L1146.7,283.7 L1119.9,289.2 L1110.3,282.6Z M1154.1,296.2 L1158.9,309.8 L1133.9,306.6 L1127.8,297.3Z" fill="#9a0c0c" stroke="#9a0c0c" stroke-width="0.6"/></g>
<g opacity="0.72" clip-path="url(#tblclip2)"><path d="M1127.3,259.7 L1134.6,267.1 L1118.2,274.7 L1111,270.6Z M1139.6,277 L1142,289.1 L1127.4,289.4 L1123.7,281.1Z M1141.9,302.8 L1139.2,317.6 L1128.8,310.8 L1129.1,299.5Z M1134,333.1 L1126.5,348.5 L1122.1,335.5 L1126.4,322.9Z M1117.1,363.2 L1105.9,376.8 L1108.5,359.8 L1116.1,348Z M1093.6,388.7 L1080.6,398.4 L1089.9,380.1 L1099.6,370.7Z M1067.3,405.5 L1054.3,409.9 L1069.1,393.2 L1079.6,387.7Z M1042,411.3 L1031,409.6 L1049.5,397.1 L1059,396.4Z M1021.7,404.9 L1014.4,397.5 L1033.8,391.3 L1041,395.4Z M1009.4,387.6 L1007,375.5 L1024.6,376.6 L1028.3,384.9Z M1007.1,361.8 L1009.8,347 L1023.2,355.2 L1022.9,366.5Z M1015,331.5 L1022.5,316.1 L1029.9,330.5 L1025.6,343.1Z M1031.9,301.4 L1043.1,287.8 L1043.5,306.2 L1035.9,318Z M1055.4,275.9 L1068.4,266.2 L1062.1,285.9 L1052.4,295.3Z M1081.7,259.1 L1094.7,254.7 L1082.9,272.8 L1072.4,278.3Z M1107,253.3 L1118,255 L1102.5,268.9 L1093,269.6Z" fill="#8888ff" stroke="#8888ff" stroke-width="0.6"/><path d="M1134.6,267.1 L1139.6,277 L1123.7,281.1 L1118.2,274.7Z M1142,289.1 L1141.9,302.8 L1129.1,299.5 L1127.4,289.4Z M1139.2,317.6 L1134,333.1 L1126.4,322.9 L1128.8,310.8Z M1126.5,348.5 L1117.1,363.2 L1116.1,348 L1122.1,335.5Z M1105.9,376.8 L1093.6,388.7 L1099.6,370.7 L1108.5,359.8Z M1080.6,398.4 L1067.3,405.5 L1079.6,387.7 L1089.9,380.1Z M1054.3,409.9 L1042,411.3 L1059,396.4 L1069.1,393.2Z M1031,409.6 L1021.7,404.9 L1041,395.4 L1049.5,397.1Z M1014.4,397.5 L1009.4,387.6 L1028.3,384.9 L1033.8,391.3Z M1007,375.5 L1007.1,361.8 L1022.9,366.5 L1024.6,376.6Z M1009.8,347 L1015,331.5 L1025.6,343.1 L1023.2,355.2Z M1022.5,316.1 L1031.9,301.4 L1035.9,318 L1029.9,330.5Z M1043.1,287.8 L1055.4,275.9 L1052.4,295.3 L1043.5,306.2Z M1068.4,266.2 L1081.7,259.1 L1072.4,278.3 L1062.1,285.9Z M1094.7,254.7 L1107,253.3 L1093,269.6 L1082.9,272.8Z M1118,255 L1127.3,259.7 L1111,270.6 L1102.5,268.9Z" fill="#6e6ef0" stroke="#6e6ef0" stroke-width="0.6"/></g>
<g opacity="0.6"><path d="M1142.9,397.6 L1139.1,400.1 L1134.8,394.2 L1136.6,392.1Z M1132.7,400.7 L1123.7,399.2 L1123.6,393.1 L1130.4,394.6Z M1112.5,395.8 L1099.4,390.5 L1103.5,384.9 L1114.5,389.8Z M1084.8,383.5 L1069.1,375.1 L1076.9,370.8 L1090.8,378.5Z M1052.9,365.5 L1036.6,354.9 L1047.1,352.3 L1062.2,361.9Z M1020.7,343.7 L1005.6,332.3 L1017.6,331.7 L1032.1,342.1Z M992,320.9 L980,310 L992.1,311.5 L1004.2,321.4Z M970.2,299.8 L962.9,290.7 L973.5,294.2 L981.8,302.4Z M958.2,283 L956.2,276.8 L964.2,281.8 L967.6,287.3Z M957.1,272.4 L960.9,269.9 L965.2,275.8 L963.4,277.9Z M967.3,269.3 L976.3,270.8 L976.4,276.9 L969.6,275.4Z M987.5,274.2 L1000.6,279.5 L996.5,285.1 L985.5,280.2Z M1015.2,286.5 L1030.9,294.9 L1023.1,299.2 L1009.2,291.5Z M1047.1,304.5 L1063.4,315.1 L1052.9,317.7 L1037.8,308.1Z M1079.3,326.3 L1094.4,337.7 L1082.4,338.3 L1067.9,327.9Z M1108,349.1 L1120,360 L1107.9,358.5 L1095.8,348.6Z M1129.8,370.2 L1137.1,379.3 L1126.5,375.8 L1118.2,367.6Z M1141.8,387 L1143.8,393.2 L1135.8,388.2 L1132.4,382.7Z" fill="#14dc14" stroke="#14dc14" stroke-width="0.6"/><path d="M1139.1,400.1 L1132.7,400.7 L1130.4,394.6 L1134.8,394.2Z M1123.7,399.2 L1112.5,395.8 L1114.5,389.8 L1123.6,393.1Z M1099.4,390.5 L1084.8,383.5 L1090.8,378.5 L1103.5,384.9Z M1069.1,375.1 L1052.9,365.5 L1062.2,361.9 L1076.9,370.8Z M1036.6,354.9 L1020.7,343.7 L1032.1,342.1 L1047.1,352.3Z M1005.6,332.3 L992,320.9 L1004.2,321.4 L1017.6,331.7Z M980,310 L970.2,299.8 L981.8,302.4 L992.1,311.5Z M962.9,290.7 L958.2,283 L967.6,287.3 L973.5,294.2Z M956.2,276.8 L957.1,272.4 L963.4,277.9 L964.2,281.8Z M960.9,269.9 L967.3,269.3 L969.6,275.4 L965.2,275.8Z M976.3,270.8 L987.5,274.2 L985.5,280.2 L976.4,276.9Z M1000.6,279.5 L1015.2,286.5 L1009.2,291.5 L996.5,285.1Z M1030.9,294.9 L1047.1,304.5 L1037.8,308.1 L1023.1,299.2Z M1063.4,315.1 L1079.3,326.3 L1067.9,327.9 L1052.9,317.7Z M1094.4,337.7 L1108,349.1 L1095.8,348.6 L1082.4,338.3Z M1120,360 L1129.8,370.2 L1118.2,367.6 L1107.9,358.5Z M1137.1,379.3 L1141.8,387 L1132.4,382.7 L1126.5,375.8Z M1143.8,393.2 L1142.9,397.6 L1136.6,392.1 L1135.8,388.2Z" fill="#0a800a" stroke="#0a800a" stroke-width="0.6"/></g>
<circle cx="1067" cy="336" r="37" fill="#00ffff" opacity="0.5"/>
<circle cx="1086" cy="339" r="24" fill="#40ffff" opacity="0.25"/>
<polygon points="1122,248 1157,238 1151,273" fill="#14dc14" opacity="0.6"/>
<polygon points="1108,275 1128,264 1140,280 1122,290" fill="#14dc14" opacity="0.6"/>
<polygon points="960,270 997,270 975,304" fill="#0000ff" opacity="0.6"/>
<ellipse cx="990" cy="290" rx="18" ry="12" transform="rotate(35 990 290)" fill="#0000ff" opacity="0.45"/>
<circle cx="1096" cy="387" r="18" fill="#ff0000" opacity="0.7"/>
<circle cx="1044" cy="284" r="14" fill="#ff0000" opacity="0.35"/>
<polygon points="1015,405 1047,397 1045,406" fill="#14dc14" opacity="0.7"/></svg><!--/SCENE-->

</body></html>
